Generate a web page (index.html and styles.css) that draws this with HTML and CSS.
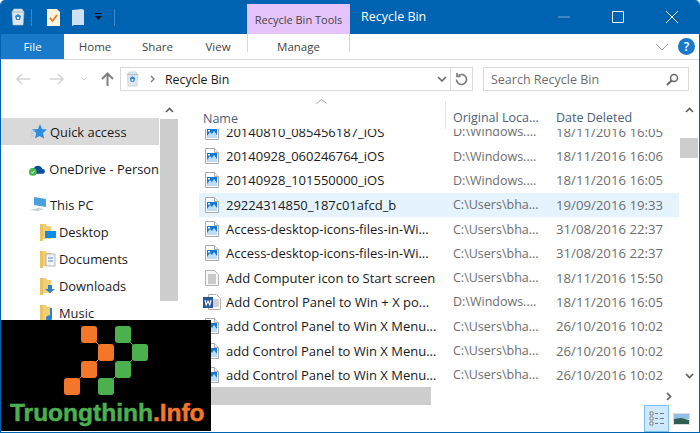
FILE: index.html
```html
<!DOCTYPE html>
<html lang="en">
<head>
    <meta charset="UTF-8">
    <title>Recycle Bin</title>
    <link rel="stylesheet" href="styles.css">
</head>
<body>
    <svg class="defs" aria-hidden="true">
        <symbol id="img-file" viewBox="0 0 14 16">
            <path d="M.5.5h9l4 4v11H.5z" fill="#fff" stroke="#a9a9a9"/>
            <path d="M9.5.5v4h4" fill="#eee" stroke="#a9a9a9"/>
            <rect x="2" y="5" width="10" height="9" fill="#0f78d4"/>
            <path d="M2 12l3-4 2 2 2-3 3 4v3H2z" fill="#bcdcf5"/>
            <rect x="3" y="6" width="2" height="1.5" fill="#fff"/>
        </symbol>
        <symbol id="txt-file" viewBox="0 0 14 16">
            <path d="M.5.5h9l4 4v11H.5z" fill="#f7f7f7" stroke="#b4b4b4"/>
            <path d="M3 5h8M3 7h8M3 9h8M3 11h8M3 13h8" stroke="#9c9c9c"/>
        </symbol>
        <symbol id="word-file" viewBox="0 0 18 16">
            <path d="M5.500.5h8l4 4v11h-12z" fill="#fff" stroke="#b0b0b0"/>
            <path d="M10 6h6M10 8h6M10 10h6M10 12h6" stroke="#a5a5a5"/>
            <rect y="3" width="10" height="11" fill="#2b579a"/>
            <path d="M2 6l1.200 5 1.800-4 1.800 4L8 6" fill="none" stroke="#fff" stroke-width="1.100"/>
        </symbol>
        <symbol id="bin" viewBox="0 0 16 18">
            <path d="M2 4l2-3h8l2 3-1 13H3z" fill="#dfe6ec" stroke="#b9c3cb" stroke-width=".6"/>
            <path d="M2 4h12" stroke="#aab4bc"/>
            <path d="M5 8l3-2 3 2-1 4H6z" fill="#2b8ad8"/>
            <path d="M7 9h2v2H7z" fill="#fff"/>
        </symbol>
        <symbol id="folder" viewBox="0 0 13 18">
            <path d="M0 1h6l1 2h4v13H3l-3 2z" fill="#f2cf75"/>
            <path d="M0 1h3v17H0z" fill="#e9c262"/>
        </symbol>
    </svg>

    <div class="window">
        <header class="titlebar">
            <div class="qat">
                <svg class="qat-bin" width="16" height="18"><use href="#bin"/></svg>
                <span class="qat-sep"></span>
                <svg class="qat-prop" width="13" height="17" viewBox="0 0 13 17">
                    <path d="M0 0h10l3 3v14H0z" fill="#fdf3dc"/>
                    <path d="M3 9l2.500 3L10 6" fill="none" stroke="#e8701e" stroke-width="1.600"/>
                </svg>
                <svg class="qat-folder" width="12" height="17" viewBox="0 0 12 17">
                    <path d="M0 1l10-1 2 1v15H2l-2 1z" fill="#cfe0f2"/>
                </svg>
                <svg class="qat-drop" width="9" height="8" viewBox="0 0 9 8">
                    <path d="M1 0h7v1H1zM1 3h7L4.500 7z" fill="#0a1420"/>
                </svg>
                <span class="qat-sep"></span>
            </div>
            <div class="tools-tab">Recycle Bin Tools</div>
            <div class="title">Recycle Bin</div>
            <div class="controls">
                <svg width="14" height="14" viewBox="0 0 14 14"><path d="M1 7h12" stroke="#7fa9d3"/></svg>
                <svg width="14" height="14" viewBox="0 0 14 14"><path d="M1.500 1.500h11v11h-11z" fill="none" stroke="#e4eef7"/></svg>
                <svg width="14" height="14" viewBox="0 0 14 14"><path d="M1 1l12 12M13 1L1 13" stroke="#e4eef7"/></svg>
            </div>
        </header>

        <nav class="tabs">
            <div class="tab tab-file">File</div>
            <div class="tab tab-home">Home</div>
            <div class="tab tab-share">Share</div>
            <div class="tab tab-view">View</div>
            <div class="tab tab-manage">Manage</div>
            <div class="tabs-right">
                <svg width="14" height="8" viewBox="0 0 14 8"><path d="M1 1l6 6 6-6" fill="none" stroke="#a8a8a8"/></svg>
                <span class="help">?</span>
            </div>
        </nav>

        <div class="addressbar">
            <div class="nav-btns">
                <svg width="15" height="12" viewBox="0 0 15 12"><path d="M15 6H2M7 1L2 6l5 5" fill="none" stroke="#d3d3d3" stroke-width="1.500"/></svg>
                <svg width="15" height="12" viewBox="0 0 15 12"><path d="M0 6h13M8 1l5 5-5 5" fill="none" stroke="#d3d3d3" stroke-width="1.500"/></svg>
                <svg width="6" height="4" viewBox="0 0 6 4"><path d="M.5.500L3 3 5.500.500" fill="none" stroke="#d3d3d3"/></svg>
                <svg width="13" height="14" viewBox="0 0 13 14"><path d="M6.500 14V2M1 7l5.500-5.500L12 7" fill="none" stroke="#808080" stroke-width="2"/></svg>
            </div>
            <div class="address">
                <svg width="15" height="16"><use href="#bin"/></svg>
                <svg class="crumb" width="5" height="8" viewBox="0 0 5 8"><path d="M1 1l3 3-3 3" fill="none" stroke="#777" stroke-width="1.300"/></svg>
                <span class="address-text">Recycle Bin</span>
                <svg class="address-drop" width="10" height="6" viewBox="0 0 10 6"><path d="M1 1l4 4 4-4" fill="none" stroke="#666" stroke-width="1.500"/></svg>
                <div class="refresh">
                    <svg width="13" height="13" viewBox="0 0 13 13"><path d="M3.500 2.500A5 5 0 1 1 1.500 6.500M2 0v3.500h3.500" fill="none" stroke="#7d7d7d" stroke-width="1.700"/></svg>
                </div>
            </div>
            <div class="search">
                <span>Search Recycle Bin</span>
                <svg width="13" height="13" viewBox="0 0 13 13"><circle cx="8" cy="5" r="3.500" fill="none" stroke="#666" stroke-width="1.500"/><path d="M5.500 7.500L1 12" stroke="#666" stroke-width="2"/></svg>
            </div>
        </div>

        <main class="main">
            <aside class="sidebar">
                <div class="tree">
                    <div class="node node-active">
                        <svg width="16" height="15" viewBox="0 0 16 15"><path d="M9 0l2 5 5 .500-4 3.500 1.200 5.500L8.500 12 4 14.500 5.200 9 1 5.500 7 5z" fill="#2f8de0"/><path d="M0 7h4M0 9.500h3M0 12h3" stroke="#9cc8ee"/></svg>
                        Quick access
                    </div>
                    <div class="node node-onedrive">
                        <svg class="icon-drive" width="18" height="15" viewBox="0 0 18 15">
                            <path d="M2 10a3 3 0 0 1 3-3 5 5 0 0 1 9 1 2.500 2.500 0 0 1 0 5H4a2 2 0 0 1-2-3z" fill="#0a4c9c"/>
                            <circle cx="4" cy="11" r="4" fill="#47b649"/>
                            <path d="M2.300 11l1.300 1.300 2.200-2.600" fill="none" stroke="#fff"/>
                        </svg>
                        OneDrive - Person
                    </div>
                    <div class="node node-pc">
                        <svg width="17" height="15" viewBox="0 0 17 15">
                            <path d="M4 0l12 2v8L4 8z" fill="#4a9fdc"/>
                            <path d="M0 13l8-2 6 1-6 2z" fill="#c8ced3"/>
                        </svg>
                        This PC
                    </div>
                    <div class="node node-child">
                        <svg width="16" height="18" viewBox="0 0 16 18"><use href="#folder" width="13" height="18"/><rect x="5" y="8" width="11" height="7" fill="#0f8ae6"/></svg>
                        Desktop
                    </div>
                    <div class="node node-child">
                        <svg width="16" height="18" viewBox="0 0 16 18"><use href="#folder" width="13" height="18"/><rect x="6" y="4" width="9" height="12" fill="#f2f4f6" stroke="#9aa2a8" stroke-width=".7"/><path d="M8 8h5M8 11h5" stroke="#4d8fc9"/></svg>
                        Documents
                    </div>
                    <div class="node node-child">
                        <svg width="16" height="18" viewBox="0 0 16 18"><use href="#folder" width="13" height="18"/><path d="M8 8h4v4h3l-5 4-5-4h3z" fill="#2a80d2"/></svg>
                        Downloads
                    </div>
                    <div class="node node-child">
                        <svg width="16" height="18" viewBox="0 0 16 18"><use href="#folder" width="13" height="18"/><path d="M10 4h2v10a3 3 0 1 1-2-2.500z" fill="#2a80d2"/></svg>
                        Music
                    </div>
                </div>
                <div class="scroll-v side-scroll">
                    <svg class="arrow" width="9" height="6" viewBox="0 0 9 6"><path d="M1 5l3.500-3.500L8 5" fill="none" stroke="#606060" stroke-width="1.700"/></svg>
                    <div class="thumb"></div>
                </div>
            </aside>

            <section class="files">
                <div class="list-area">
                    <div class="cols-head">
                        <svg class="sort" width="11" height="5" viewBox="0 0 11 5"><path d="M.5 4.500l5-4 5 4" fill="none" stroke="#a0a0a0"/></svg>
                        <div class="col-name">Name</div>
                        <div class="col-loc">Original Loca...</div>
                        <div class="col-date">Date Deleted</div>
                    </div>
                    <div class="rows">
                        <div class="row"><svg width="14" height="16"><use href="#img-file"/></svg><span class="name">20140810_085456187_iOS</span><span class="loc">D:\Windows....</span><span class="date">18/11/2016 16:05</span></div>
                        <div class="row"><svg width="14" height="16"><use href="#img-file"/></svg><span class="name">20140928_060246764_iOS</span><span class="loc">D:\Windows....</span><span class="date">18/11/2016 16:06</span></div>
                        <div class="row"><svg width="14" height="16"><use href="#img-file"/></svg><span class="name">20140928_101550000_iOS</span><span class="loc">D:\Windows....</span><span class="date">18/11/2016 16:05</span></div>
                        <div class="row row-selected"><svg width="14" height="16"><use href="#img-file"/></svg><span class="name">29224314850_187c01afcd_b</span><span class="loc">C:\Users\bha...</span><span class="date">19/09/2016 19:33</span></div>
                        <div class="row"><svg width="14" height="16"><use href="#img-file"/></svg><span class="name">Access-desktop-icons-files-in-Wi...</span><span class="loc">C:\Users\bha...</span><span class="date">31/08/2016 22:37</span></div>
                        <div class="row"><svg width="14" height="16"><use href="#img-file"/></svg><span class="name">Access-desktop-icons-files-in-Wi...</span><span class="loc">C:\Users\bha...</span><span class="date">31/08/2016 22:37</span></div>
                        <div class="row"><svg width="14" height="16"><use href="#txt-file"/></svg><span class="name">Add Computer icon to Start screen</span><span class="loc">C:\Users\bha...</span><span class="date">18/11/2016 15:50</span></div>
                        <div class="row"><svg class="word" width="18" height="16"><use href="#word-file"/></svg><span class="name">Add Control Panel to Win + X po...</span><span class="loc">D:\Windows....</span><span class="date">18/11/2016 16:05</span></div>
                        <div class="row"><svg width="14" height="16"><use href="#img-file"/></svg><span class="name">add Control Panel to Win X Menu...</span><span class="loc">C:\Users\bha...</span><span class="date">26/10/2016 10:02</span></div>
                        <div class="row"><svg width="14" height="16"><use href="#img-file"/></svg><span class="name">add Control Panel to Win X Menu...</span><span class="loc">C:\Users\bha...</span><span class="date">26/10/2016 10:02</span></div>
                        <div class="row"><svg width="14" height="16"><use href="#img-file"/></svg><span class="name">add Control Panel to Win X Menu...</span><span class="loc">C:\Users\bha...</span><span class="date">26/10/2016 10:02</span></div>
                    </div>
                    <div class="scroll-h">
                        <div class="thumb-h"></div>
                        <svg width="6" height="9" viewBox="0 0 6 9"><path d="M1 1l3.500 3.500L1 8" fill="none" stroke="#606060" stroke-width="1.700"/></svg>
                    </div>
                </div>
                <div class="scroll-v list-scroll">
                    <svg class="arrow" width="9" height="6" viewBox="0 0 9 6"><path d="M1 5l3.500-3.500L8 5" fill="none" stroke="#606060" stroke-width="1.700"/></svg>
                    <div class="thumb"></div>
                    <svg class="arrow-down" width="9" height="6" viewBox="0 0 9 6"><path d="M1 1l3.500 3.500L8 1" fill="none" stroke="#606060" stroke-width="1.700"/></svg>
                </div>
            </section>
        </main>

        <footer class="statusbar">
            <div class="view-btn view-btn-on">
                <svg width="16" height="16" viewBox="0 0 16 16">
                    <path d="M1 1h3v3H1zM1 6h3v3H1zM1 11h3v3H1z" fill="#fff" stroke="#555" stroke-width=".7"/>
                    <path d="M6 2.500h3M11 2.500h4M6 7.500h3M11 7.500h4M6 12.500h3M11 12.500h4" stroke="#777"/>
                </svg>
            </div>
            <div class="view-btn view-btn-thumb">
                <svg width="17" height="12" viewBox="0 0 17 12">
                    <rect width="17" height="12" fill="#fff" stroke="#bbb"/>
                    <rect x="1" y="1" width="15" height="5" fill="#8fbfe6"/>
                    <path d="M1 6l7-1 8 2v4H1z" fill="#2f5d50"/>
                </svg>
            </div>
        </footer>
    </div>

    <div class="watermark">
        <svg width="90" height="70" viewBox="0 0 90 70">
            <path d="M25 9l17 17-17 17-17 17" fill="none" stroke="#f47629"/>
            <path d="M59 9l17 17-17 17-17 17" fill="none" stroke="#4cb04e"/>
            <rect x="17" width="16" height="17" rx="3" fill="#f47629"/>
            <rect x="34" y="18" width="16" height="17" rx="3" fill="#f47629"/>
            <rect x="17" y="35" width="16" height="17" rx="3" fill="#f47629"/>
            <rect y="52" width="16" height="17" rx="3" fill="#f47629"/>
            <rect x="51" width="16" height="17" rx="3" fill="#4cb04e"/>
            <rect x="68" y="18" width="16" height="17" rx="3" fill="#4cb04e"/>
            <rect x="51" y="35" width="16" height="17" rx="3" fill="#4cb04e"/>
            <rect x="34" y="52" width="16" height="17" rx="3" fill="#4cb04e"/>
        </svg>
        <div class="brand">Truongthinh<span class="brand-info">.Info</span></div>
    </div>
</body>
</html>
```

FILE: styles.css
```css
* {
    box-sizing: border-box;
}

body {
    margin: 0;
    width: 700px;
    height: 433px;
    overflow: hidden;
    position: relative;
    background: #fff;
    font-family: "Open Sans", "Noto Sans", sans-serif;
    font-size: 12.5px;
    color: #1a1a1a;
}

.defs {
    position: absolute;
    width: 0;
    height: 0;
}

.window {
    width: 700px;
    height: 433px;
    display: flex;
    flex-direction: column;
    border: 1px solid #0063b1;
    border-top: none;
    border-radius: 5px 5px 0 0;
    overflow: hidden;
}

/* title bar */
.titlebar {
    height: 34px;
    flex-shrink: 0;
    display: flex;
    background: #0063b1;
    color: #fff;
}

.qat {
    width: 246px;
    display: flex;
    align-items: center;
    padding: 0 0 0 9px;
}

.qat-sep {
    width: 1px;
    height: 17px;
    background: #3d87c5;
}

.qat-bin {
    margin-right: 5px;
}

.qat-prop {
    margin-left: 15px;
}

.qat-folder {
    margin-left: 12px;
}

.qat-drop {
    margin-left: 10px;
    margin-right: 11px;
}

.tools-tab {
    width: 103px;
    margin-top: 4px;
    background: #e6c4fb;
    color: #444;
    font-size: 11px;
    display: flex;
    align-items: center;
    justify-content: center;
}

.title {
    flex: 1;
    padding-left: 11px;
    line-height: 34px;
}

.controls {
    display: flex;
    align-items: center;
    gap: 40px;
    padding: 0 20px 0 0;
}

/* ribbon tabs */
.tabs {
    height: 26px;
    flex-shrink: 0;
    display: flex;
    border-bottom: 1px solid #dadbdc;
    color: #444;
    font-size: 11.5px;
}

.tab {
    display: flex;
    align-items: center;
    justify-content: center;
}

.tab-file {
    width: 63px;
    background: #1979ca;
    color: #fff;
}

.tab-home {
    width: 62px;
}

.tab-share {
    width: 63px;
}

.tab-view {
    width: 58px;
}

.tab-manage {
    width: 103px;
    border-left: 1px solid #d6d6d6;
    border-right: 1px solid #d6d6d6;
    margin-bottom: 7px;
    padding-top: 7px;
}

.tabs-right {
    flex: 1;
    display: flex;
    align-items: center;
    justify-content: flex-end;
    gap: 9px;
    padding-right: 4px;
}

.help {
    width: 17px;
    height: 17px;
    border-radius: 50%;
    background: #1979ca;
    color: #fff;
    font-size: 12px;
    font-weight: 600;
    text-align: center;
    line-height: 17px;
}

/* address bar */
.addressbar {
    height: 38px;
    flex-shrink: 0;
    display: flex;
    align-items: flex-start;
    padding-top: 7px;
}

.nav-btns {
    width: 119px;
    height: 23px;
    display: flex;
    align-items: center;
    padding-left: 14px;
}

.nav-btns svg:nth-child(2) {
    margin-left: 20px;
}

.nav-btns svg:nth-child(3) {
    margin-left: 16px;
}

.nav-btns svg:nth-child(4) {
    margin-left: 14px;
}

.address {
    width: 353px;
    height: 24px;
    display: flex;
    align-items: center;
    border: 1px solid #d9d9d9;
    padding-left: 4px;
}

.crumb {
    margin-left: 10px;
}

.address-text {
    margin-left: 10px;
    flex: 1;
    font-size: 12.3px;
}

.address-drop {
    margin-right: 3px;
}

.refresh {
    width: 22px;
    height: 22px;
    border-left: 1px solid #d9d9d9;
    display: flex;
    align-items: center;
    justify-content: center;
}

.search {
    width: 206px;
    height: 24px;
    margin-left: 10px;
    display: flex;
    align-items: center;
    justify-content: space-between;
    border: 1px solid #d9d9d9;
    padding: 0 9px 0 7px;
    color: #6d6d6d;
}

/* main area */
.main {
    flex: 1;
    min-height: 0;
    display: flex;
}

.sidebar {
    width: 177px;
    flex-shrink: 0;
    display: flex;
}

.tree {
    width: 158px;
    flex-shrink: 0;
    padding-top: 20px;
    white-space: nowrap;
    overflow: hidden;
    font-size: 12.9px;
}

.node {
    height: 27px;
    display: flex;
    align-items: center;
    gap: 3px;
    padding-left: 30px;
}

.node-active {
    background: #d9d9d9;
}

.node-onedrive {
    margin-top: 10px;
    padding-left: 28px;
}

.node-pc {
    margin-top: 9px;
    padding-left: 29px;
}

.node-child {
    padding-left: 39px;
}

.scroll-v {
    width: 18px;
    flex-shrink: 0;
    display: flex;
    flex-direction: column;
    align-items: center;
}

.arrow {
    margin-top: 9px;
}

.side-scroll {
    margin-left: 1px;
}

.side-scroll .thumb {
    width: 18px;
    height: 182px;
    margin-top: 6px;
    background: #cdcdcd;
}

.files {
    flex: 1;
    min-width: 0;
    display: flex;
    padding-left: 21px;
}

.list-area {
    width: 480px;
    flex-shrink: 0;
    display: flex;
    flex-direction: column;
}

.cols-head {
    height: 31px;
    flex-shrink: 0;
    position: relative;
    display: flex;
    align-items: flex-end;
    padding-bottom: 3px;
    color: #4c607a;
}

.sort {
    position: absolute;
    left: 117px;
    top: 1px;
}

.col-name {
    width: 247px;
    padding-left: 4px;
    border-right: 1px solid #e5e5e5;
    height: 28px;
    line-height: 36px;
    margin-bottom: -3px;
}

.col-loc {
    width: 110px;
    padding-left: 7px;
}

.col-date {
    flex: 1;
}

.rows {
    height: 258px;
    flex-shrink: 0;
    display: flex;
    flex-direction: column;
    justify-content: flex-end;
    overflow: hidden;
    font-size: 13px;
}

.row {
    height: 24.3px;
    flex-shrink: 0;
    display: flex;
    align-items: center;
    white-space: nowrap;
    padding-left: 6px;
}

.row-selected {
    background: #e5f3ff;
}

.row svg {
    flex-shrink: 0;
}

.row svg.word {
    margin-left: -2px;
    margin-right: -2px;
}

.name {
    width: 227px;
    margin-left: 7px;
}

.loc {
    width: 103px;
    color: #6d6d6d;
    font-size: 12.5px;
}

.date {
    color: #6d6d6d;
    font-size: 13.2px;
}

.scroll-h {
    height: 18px;
    flex-shrink: 0;
    display: flex;
    align-items: center;
}

.thumb-h {
    width: 232px;
    height: 18px;
    background: #cdcdcd;
}

.scroll-h svg {
    margin-left: 235px;
}

.list-scroll {
    margin-left: 1px;
}

.list-scroll .thumb {
    width: 18px;
    height: 20px;
    margin-top: 25px;
    background: #cdcdcd;
}

.arrow-down {
    margin-top: 215px;
}

/* status bar */
.statusbar {
    height: 27px;
    flex-shrink: 0;
    display: flex;
    justify-content: flex-end;
    gap: 4px;
    padding-right: 9px;
}

.view-btn {
    display: flex;
    align-items: center;
    justify-content: center;
}

.view-btn-on {
    width: 25px;
    background: #cde8ff;
    border: 1px solid #7cc0ee;
}

.view-btn-thumb {
    width: 17px;
}

/* overlay logo */
.watermark {
    position: absolute;
    left: 1px;
    top: 320px;
    width: 210px;
    height: 111px;
    background: #000;
    display: flex;
    flex-direction: column;
    padding: 6px 0 0 63px;
}

.brand {
    margin: 3px 0 0 -54px;
    font-family: "Liberation Sans", sans-serif;
    font-size: 24.5px;
    font-weight: 700;
    line-height: 28px;
    color: #4cb04e;
    white-space: nowrap;
    -webkit-text-stroke: .5px currentColor;
}

.brand-info {
    color: #f47629;
}
```
